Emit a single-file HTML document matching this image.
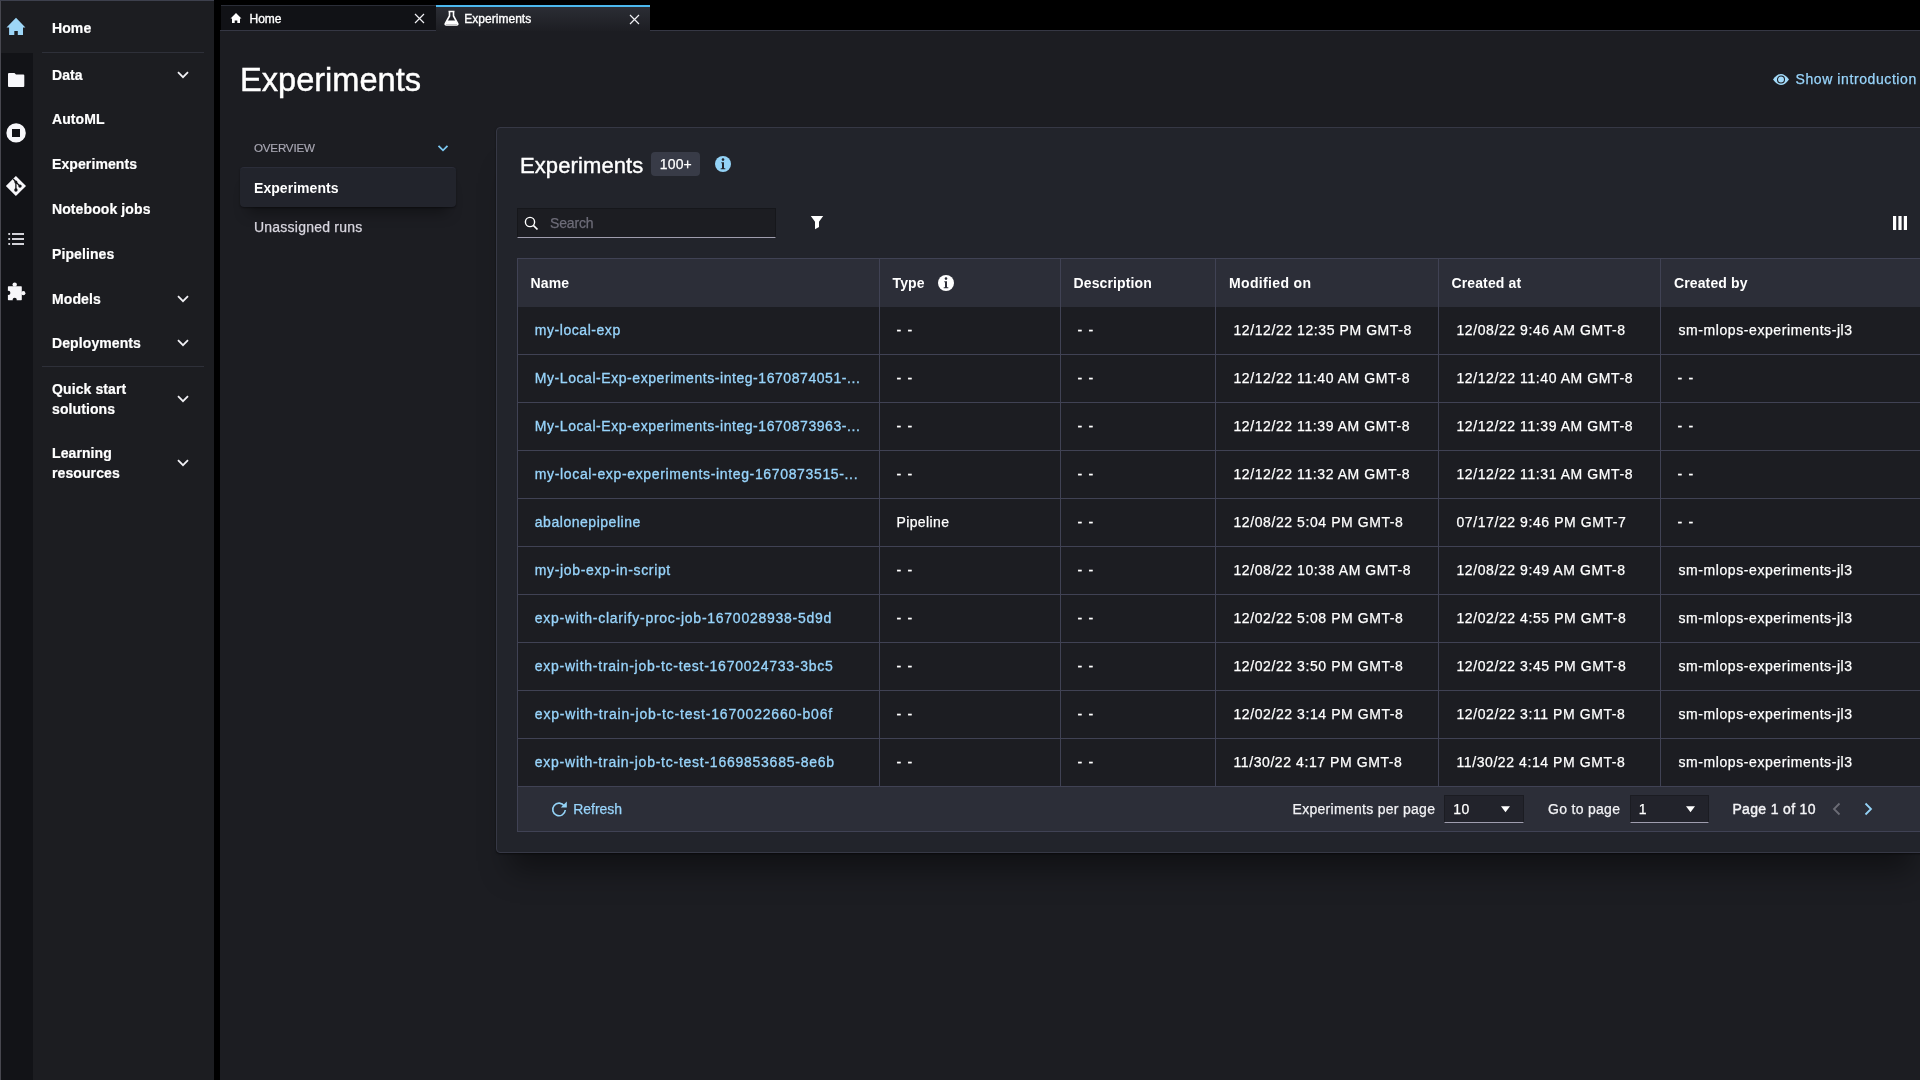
<!DOCTYPE html>
<html><head><meta charset="utf-8"><title>Experiments</title>
<style>
html,body{margin:0;padding:0;width:1920px;height:1080px;overflow:hidden;background:#1c1d22;font-family:"Liberation Sans", sans-serif;}
.t{position:absolute;line-height:1;white-space:nowrap;}
</style></head><body>
<div style="position:absolute;left:0;top:0;width:1920px;height:1080px;will-change:transform"><div style="position:absolute;left:0px;top:0px;width:1920px;height:1080px;background:#1c1d22"></div><div style="position:absolute;left:0px;top:0px;width:214px;height:1080px;background:#1c1d21"></div><div style="position:absolute;left:1px;top:53px;width:32px;height:1027px;background:#121317"></div><div style="position:absolute;left:0px;top:0px;width:1px;height:1080px;background:#47474f"></div><div style="position:absolute;left:0px;top:0px;width:214px;height:1px;background:#3d404d"></div><div style="position:absolute;left:214px;top:0px;width:6px;height:1080px;background:#000"></div><div style="position:absolute;left:220px;top:0px;width:1700px;height:31px;background:#000"></div><div style="position:absolute;left:220px;top:30px;width:1700px;height:1px;background:#353744"></div><div style="position:absolute;left:221px;top:5px;width:214.5px;height:25px;background:#111216;border-top:1px solid #2b2e38;box-sizing:border-box"></div><div style="position:absolute;left:436px;top:5px;width:214px;height:26px;background:linear-gradient(#2b2d34,#1d1e23);border-top:2px solid #4cb8ee;box-sizing:border-box"></div><svg style="position:absolute;left:0;top:0" width="34" height="310" viewBox="0 0 34 310">
<path d="M16 17.8 L25.4 27.5 L23 27.5 L23 35 L17.8 35 L17.8 31 L14.3 31 L14.3 35 L9.1 35 L9.1 27.5 L6.5 27.5 Z" fill="#9dd6f7"/>
<path d="M8 74 Q8 73 9 73 L14.5 73 L16 74.6 L23.3 74.6 Q24.3 74.6 24.3 75.6 L24.3 86 Q24.3 87 23.3 87 L9 87 Q8 87 8 86 Z" fill="#f7f7fa"/>
<circle cx="16.1" cy="132.9" r="9.7" fill="#f7f7fa"/>
<rect x="12" y="129" width="8" height="8" fill="#121317"/>
<path d="M15.9 175.9 L26 186 L15.9 196 L5.9 186 Z" fill="#f7f7fa"/>
<path d="M13.2 178.8 L15.9 182 L15.9 190 M15.9 182 L20 186.1" stroke="#121317" stroke-width="1.3" fill="none"/>
<circle cx="15.9" cy="182" r="1.5" fill="#121317"/><circle cx="15.9" cy="190" r="1.7" fill="#121317"/><circle cx="20" cy="186.1" r="1.7" fill="#121317"/>
<g fill="#e8e8ee"><circle cx="9.2" cy="234" r="1.1"/><circle cx="9.2" cy="239" r="1.1"/><circle cx="9.2" cy="244" r="1.1"/>
<rect x="12" y="233.1" width="12" height="1.8"/><rect x="12" y="238.1" width="12" height="1.8"/><rect x="12" y="243.1" width="12" height="1.8"/></g>
<g fill="#f7f7fa"><rect x="7.9" y="286.3" width="13.9" height="13.9" rx="0.6"/><circle cx="14.7" cy="284.6" r="2.2"/><circle cx="23.3" cy="293.2" r="2.1"/></g>
<g fill="#121317"><circle cx="8.3" cy="292.9" r="2.1"/><circle cx="14.7" cy="299.9" r="2.1"/></g>
</svg><div class="t" style="left:52px;top:21.15px;font-size:14px;font-weight:700;color:#ffffff;letter-spacing:0.1px;-webkit-text-stroke:0.2px #ffffff;">Home</div><div style="position:absolute;left:42px;top:52px;width:162px;height:1px;background:#2e3039"></div><div class="t" style="left:52px;top:68.15px;font-size:14px;font-weight:700;color:#ffffff;letter-spacing:0.1px;-webkit-text-stroke:0.2px #ffffff;">Data</div><svg style="position:absolute;left:177px;top:71px" width="12" height="8" viewBox="0 0 12 8"><path d="M1 1.2 L6 6.2 L11 1.2" stroke="#f0f0f4" stroke-width="1.8" fill="none"/></svg><div class="t" style="left:52px;top:111.65px;font-size:14px;font-weight:700;color:#ffffff;letter-spacing:0.1px;-webkit-text-stroke:0.2px #ffffff;">AutoML</div><div class="t" style="left:52px;top:157.15px;font-size:14px;font-weight:700;color:#ffffff;letter-spacing:0.1px;-webkit-text-stroke:0.2px #ffffff;">Experiments</div><div class="t" style="left:52px;top:202.25px;font-size:14px;font-weight:700;color:#ffffff;letter-spacing:0.1px;-webkit-text-stroke:0.2px #ffffff;">Notebook jobs</div><div class="t" style="left:52px;top:247.15px;font-size:14px;font-weight:700;color:#ffffff;letter-spacing:0.1px;-webkit-text-stroke:0.2px #ffffff;">Pipelines</div><div class="t" style="left:52px;top:292.35px;font-size:14px;font-weight:700;color:#ffffff;letter-spacing:0.1px;-webkit-text-stroke:0.2px #ffffff;">Models</div><svg style="position:absolute;left:177px;top:295px" width="12" height="8" viewBox="0 0 12 8"><path d="M1 1.2 L6 6.2 L11 1.2" stroke="#f0f0f4" stroke-width="1.8" fill="none"/></svg><div class="t" style="left:52px;top:336.35px;font-size:14px;font-weight:700;color:#ffffff;letter-spacing:0.1px;-webkit-text-stroke:0.2px #ffffff;">Deployments</div><svg style="position:absolute;left:177px;top:339px" width="12" height="8" viewBox="0 0 12 8"><path d="M1 1.2 L6 6.2 L11 1.2" stroke="#f0f0f4" stroke-width="1.8" fill="none"/></svg><div style="position:absolute;left:42px;top:366px;width:162px;height:1px;background:#2e3039"></div><div class="t" style="left:52px;top:382.45px;font-size:14px;font-weight:700;color:#ffffff;letter-spacing:0.1px;-webkit-text-stroke:0.2px #ffffff;">Quick start</div><div class="t" style="left:52px;top:402.25px;font-size:14px;font-weight:700;color:#ffffff;letter-spacing:0.1px;-webkit-text-stroke:0.2px #ffffff;">solutions</div><svg style="position:absolute;left:177px;top:395px" width="12" height="8" viewBox="0 0 12 8"><path d="M1 1.2 L6 6.2 L11 1.2" stroke="#f0f0f4" stroke-width="1.8" fill="none"/></svg><div class="t" style="left:52px;top:446.25px;font-size:14px;font-weight:700;color:#ffffff;letter-spacing:0.1px;-webkit-text-stroke:0.2px #ffffff;">Learning</div><div class="t" style="left:52px;top:466.15px;font-size:14px;font-weight:700;color:#ffffff;letter-spacing:0.1px;-webkit-text-stroke:0.2px #ffffff;">resources</div><svg style="position:absolute;left:177px;top:459px" width="12" height="8" viewBox="0 0 12 8"><path d="M1 1.2 L6 6.2 L11 1.2" stroke="#f0f0f4" stroke-width="1.8" fill="none"/></svg><svg style="position:absolute;left:229px;top:12px" width="14" height="12" viewBox="0 0 14 12"><path d="M7 1 L12.5 6.5 L11 6.5 L11 11 L8.3 11 L8.3 8.5 L5.7 8.5 L5.7 11 L3 11 L3 6.5 L1.5 6.5 Z" fill="#fff"/></svg><div class="t" style="left:249.6px;top:12.74px;font-size:12px;font-weight:400;color:#fff;letter-spacing:-0.1px;-webkit-text-stroke:0.35px #fff;">Home</div><svg style="position:absolute;left:413.5px;top:13px" width="11" height="11" viewBox="0 0 11 11"><path d="M1 1 L10 10 M10 1 L1 10" stroke="#f0f0f4" stroke-width="1.2"/></svg><svg style="position:absolute;left:444px;top:10px" width="15" height="16" viewBox="0 0 15 16"><path d="M4.5 1.5 L10.5 1.5 M5.5 1.5 L5.5 6 L1.3 13.5 Q0.8 15 2.3 15 L12.7 15 Q14.2 15 13.7 13.5 L9.5 6 L9.5 1.5" stroke="#fff" stroke-width="1.6" fill="none"/><path d="M3.2 10.5 L11.8 10.5 L13.5 14 L1.5 14 Z" fill="#fff"/></svg><div class="t" style="left:464.3px;top:13.14px;font-size:12px;font-weight:400;color:#fff;letter-spacing:0.02px;-webkit-text-stroke:0.35px #fff;">Experiments</div><svg style="position:absolute;left:628.5px;top:14px" width="11" height="11" viewBox="0 0 11 11"><path d="M1 1 L10 10 M10 1 L1 10" stroke="#f0f0f4" stroke-width="1.2"/></svg><div class="t" style="left:240px;top:63.60px;font-size:32.6px;font-weight:400;color:#ffffff;letter-spacing:0px;-webkit-text-stroke:0.45px #ffffff;">Experiments</div><svg style="position:absolute;left:1772px;top:73px" width="18" height="13" viewBox="0 0 18 13"><path d="M1 6.5 Q9 -4.5 17 6.5 Q9 17.5 1 6.5 Z" fill="#a2d9f8"/><circle cx="9" cy="6.5" r="3.5" fill="none" stroke="#1c1d22" stroke-width="1.1"/><circle cx="9" cy="6.5" r="2.4" fill="#a2d9f8"/></svg><div class="t" style="left:1795.5px;top:72.40px;font-size:14px;font-weight:400;color:#98d4fb;letter-spacing:0.59px;-webkit-text-stroke:0.25px #98d4fb;">Show introduction</div><div class="t" style="left:254px;top:142.18px;font-size:11.6px;font-weight:400;color:#a9a8b4;letter-spacing:-0.2px;-webkit-text-stroke:0.15px #a9a8b4;">OVERVIEW</div><svg style="position:absolute;left:437px;top:144px" width="12" height="9" viewBox="0 0 12 9"><path d="M1.5 1.8 L6 6.3 L10.5 1.8" stroke="#7cc8f2" stroke-width="1.8" fill="none"/></svg><div style="position:absolute;left:240px;top:167px;width:216px;height:40px;background:#22242c;border-top:1px solid #2b2d39;box-sizing:border-box;border-radius:4px;box-shadow:0 1px 2px rgba(0,0,0,0.4),0 14px 14px -8px rgba(0,0,0,0.35)"></div><div class="t" style="left:254px;top:180.85px;font-size:14px;font-weight:700;color:#fff;letter-spacing:0.05px;">Experiments</div><div class="t" style="left:254px;top:220.15px;font-size:14px;font-weight:400;color:#d8d6df;letter-spacing:0.23px;-webkit-text-stroke:0.25px #d8d6df;">Unassigned runs</div><div style="position:absolute;left:496px;top:127px;width:1430px;height:726px;background:#22242b;border:1px solid #363845;border-radius:4px;box-sizing:border-box;box-shadow:0 1px 2px rgba(0,0,0,0.5),0 32px 28px -14px rgba(0,0,0,0.4)"></div><div class="t" style="left:520px;top:154.78px;font-size:22px;font-weight:400;color:#fff;letter-spacing:0.1px;-webkit-text-stroke:0.4px #fff;">Experiments</div><div style="position:absolute;left:651px;top:152px;width:49px;height:24px;background:#383b47;border-radius:4px"></div><div class="t" style="left:659.8px;top:157.15px;font-size:14px;font-weight:400;color:#fff;letter-spacing:0.15px;-webkit-text-stroke:0.25px #fff;">100+</div><svg style="position:absolute;left:715px;top:156px" width="16" height="16" viewBox="0 0 16 16"><circle cx="8" cy="8" r="8" fill="#94d3f7"/><circle cx="8" cy="3.6" r="1.3" fill="#22242b"/><path d="M6.3 6.2 L9 6.2 L9 12.2 L10.3 12.2 L10.3 13.2 L5.7 13.2 L5.7 12.2 L7 12.2 L7 7.2 L6.3 7.2 Z" fill="#22242b"/></svg><div style="position:absolute;left:517px;top:208px;width:259px;height:30px;background:#1c1d22;border:1px solid #16171b;border-bottom:1px solid #9f9dae;box-sizing:border-box"></div><svg style="position:absolute;left:523px;top:215px" width="17" height="17" viewBox="0 0 17 17"><circle cx="7" cy="7" r="4.6" stroke="#fff" stroke-width="1.4" fill="none"/><path d="M10.3 10.3 L14.5 14.5" stroke="#fff" stroke-width="1.7"/></svg><div class="t" style="left:550px;top:216.15px;font-size:14px;font-weight:400;color:#6d6c78;letter-spacing:-0.17px;-webkit-text-stroke:0.25px #6d6c78;">Search</div><svg style="position:absolute;left:810px;top:215px" width="14" height="15" viewBox="0 0 14 15"><path d="M0.8 1 L13.2 1 L9 6.8 L9 12 L5 14.2 L5 6.8 Z" fill="#fff"/></svg><svg style="position:absolute;left:1893px;top:216px" width="14" height="14" viewBox="0 0 14 14"><rect x="0" y="0" width="3.2" height="14" fill="#fff"/><rect x="5.4" y="0" width="3.2" height="14" fill="#fff"/><rect x="10.8" y="0" width="3.2" height="14" fill="#fff"/></svg><div style="position:absolute;left:517px;top:258px;width:1404px;height:574px;background:#1c1d22;border:1px solid #404254;box-sizing:border-box"></div><div style="position:absolute;left:518px;top:259px;width:1402px;height:48px;background:#2c2e38"></div><div class="t" style="left:530.5px;top:276.15px;font-size:14px;font-weight:700;color:#fff;letter-spacing:0.12px;">Name</div><div class="t" style="left:892.5px;top:276.15px;font-size:14px;font-weight:700;color:#fff;letter-spacing:0.12px;">Type</div><div class="t" style="left:1073.5px;top:276.15px;font-size:14px;font-weight:700;color:#fff;letter-spacing:0.12px;">Description</div><div class="t" style="left:1229px;top:276.15px;font-size:14px;font-weight:700;color:#fff;letter-spacing:0.35px;">Modified on</div><div class="t" style="left:1451.5px;top:276.15px;font-size:14px;font-weight:700;color:#fff;letter-spacing:0.12px;">Created at</div><div class="t" style="left:1674px;top:276.15px;font-size:14px;font-weight:700;color:#fff;letter-spacing:0.12px;">Created by</div><svg style="position:absolute;left:938px;top:274.5px" width="16" height="16" viewBox="0 0 16 16"><circle cx="8" cy="8" r="8" fill="#fff"/><circle cx="8" cy="3.6" r="1.3" fill="#2c2e38"/><path d="M6.3 6.2 L9 6.2 L9 12.2 L10.3 12.2 L10.3 13.2 L5.7 13.2 L5.7 12.2 L7 12.2 L7 7.2 L6.3 7.2 Z" fill="#2c2e38"/></svg><div style="position:absolute;left:517px;top:354px;width:1404px;height:1px;background:#404254"></div><div class="t" style="left:534.8px;top:323.35px;font-size:14px;color:#98d4fb;letter-spacing:0.55px;-webkit-text-stroke:0.32px #98d4fb">my-local-exp</div><div class="t" style="left:896.5px;top:323.35px;font-size:14px;font-weight:400;color:#ffffff;letter-spacing:1.2px;-webkit-text-stroke:0.3px #ffffff;">- -</div><div class="t" style="left:1077.5px;top:323.35px;font-size:14px;font-weight:400;color:#ffffff;letter-spacing:1.2px;-webkit-text-stroke:0.3px #ffffff;">- -</div><div class="t" style="left:1233.5px;top:323.35px;font-size:14px;font-weight:400;color:#ffffff;letter-spacing:0.58px;-webkit-text-stroke:0.25px #ffffff;">12/12/22 12:35 PM GMT-8</div><div class="t" style="left:1456.5px;top:323.35px;font-size:14px;font-weight:400;color:#ffffff;letter-spacing:0.58px;-webkit-text-stroke:0.25px #ffffff;">12/08/22 9:46 AM GMT-8</div><div class="t" style="left:1678.5px;top:323.35px;font-size:14px;font-weight:400;color:#ffffff;letter-spacing:0.58px;-webkit-text-stroke:0.25px #ffffff;">sm-mlops-experiments-jl3</div><div style="position:absolute;left:517px;top:402px;width:1404px;height:1px;background:#404254"></div><div class="t" style="left:534.8px;top:371.35px;font-size:14px;color:#98d4fb;letter-spacing:0.56px;-webkit-text-stroke:0.32px #98d4fb">My-Local-Exp-experiments-integ-1670874051-...</div><div class="t" style="left:896.5px;top:371.35px;font-size:14px;font-weight:400;color:#ffffff;letter-spacing:1.2px;-webkit-text-stroke:0.3px #ffffff;">- -</div><div class="t" style="left:1077.5px;top:371.35px;font-size:14px;font-weight:400;color:#ffffff;letter-spacing:1.2px;-webkit-text-stroke:0.3px #ffffff;">- -</div><div class="t" style="left:1233.5px;top:371.35px;font-size:14px;font-weight:400;color:#ffffff;letter-spacing:0.58px;-webkit-text-stroke:0.25px #ffffff;">12/12/22 11:40 AM GMT-8</div><div class="t" style="left:1456.5px;top:371.35px;font-size:14px;font-weight:400;color:#ffffff;letter-spacing:0.58px;-webkit-text-stroke:0.25px #ffffff;">12/12/22 11:40 AM GMT-8</div><div class="t" style="left:1677.5px;top:371.35px;font-size:14px;font-weight:400;color:#ffffff;letter-spacing:1.2px;-webkit-text-stroke:0.3px #ffffff;">- -</div><div style="position:absolute;left:517px;top:450px;width:1404px;height:1px;background:#404254"></div><div class="t" style="left:534.8px;top:419.35px;font-size:14px;color:#98d4fb;letter-spacing:0.56px;-webkit-text-stroke:0.32px #98d4fb">My-Local-Exp-experiments-integ-1670873963-...</div><div class="t" style="left:896.5px;top:419.35px;font-size:14px;font-weight:400;color:#ffffff;letter-spacing:1.2px;-webkit-text-stroke:0.3px #ffffff;">- -</div><div class="t" style="left:1077.5px;top:419.35px;font-size:14px;font-weight:400;color:#ffffff;letter-spacing:1.2px;-webkit-text-stroke:0.3px #ffffff;">- -</div><div class="t" style="left:1233.5px;top:419.35px;font-size:14px;font-weight:400;color:#ffffff;letter-spacing:0.58px;-webkit-text-stroke:0.25px #ffffff;">12/12/22 11:39 AM GMT-8</div><div class="t" style="left:1456.5px;top:419.35px;font-size:14px;font-weight:400;color:#ffffff;letter-spacing:0.58px;-webkit-text-stroke:0.25px #ffffff;">12/12/22 11:39 AM GMT-8</div><div class="t" style="left:1677.5px;top:419.35px;font-size:14px;font-weight:400;color:#ffffff;letter-spacing:1.2px;-webkit-text-stroke:0.3px #ffffff;">- -</div><div style="position:absolute;left:517px;top:498px;width:1404px;height:1px;background:#404254"></div><div class="t" style="left:534.8px;top:467.35px;font-size:14px;color:#98d4fb;letter-spacing:0.65px;-webkit-text-stroke:0.32px #98d4fb">my-local-exp-experiments-integ-1670873515-...</div><div class="t" style="left:896.5px;top:467.35px;font-size:14px;font-weight:400;color:#ffffff;letter-spacing:1.2px;-webkit-text-stroke:0.3px #ffffff;">- -</div><div class="t" style="left:1077.5px;top:467.35px;font-size:14px;font-weight:400;color:#ffffff;letter-spacing:1.2px;-webkit-text-stroke:0.3px #ffffff;">- -</div><div class="t" style="left:1233.5px;top:467.35px;font-size:14px;font-weight:400;color:#ffffff;letter-spacing:0.58px;-webkit-text-stroke:0.25px #ffffff;">12/12/22 11:32 AM GMT-8</div><div class="t" style="left:1456.5px;top:467.35px;font-size:14px;font-weight:400;color:#ffffff;letter-spacing:0.58px;-webkit-text-stroke:0.25px #ffffff;">12/12/22 11:31 AM GMT-8</div><div class="t" style="left:1677.5px;top:467.35px;font-size:14px;font-weight:400;color:#ffffff;letter-spacing:1.2px;-webkit-text-stroke:0.3px #ffffff;">- -</div><div style="position:absolute;left:517px;top:546px;width:1404px;height:1px;background:#404254"></div><div class="t" style="left:534.8px;top:515.35px;font-size:14px;color:#98d4fb;letter-spacing:0.53px;-webkit-text-stroke:0.32px #98d4fb">abalonepipeline</div><div class="t" style="left:896.5px;top:515.35px;font-size:14px;font-weight:400;color:#ffffff;letter-spacing:0.38px;-webkit-text-stroke:0.25px #ffffff;">Pipeline</div><div class="t" style="left:1077.5px;top:515.35px;font-size:14px;font-weight:400;color:#ffffff;letter-spacing:1.2px;-webkit-text-stroke:0.3px #ffffff;">- -</div><div class="t" style="left:1233.5px;top:515.35px;font-size:14px;font-weight:400;color:#ffffff;letter-spacing:0.58px;-webkit-text-stroke:0.25px #ffffff;">12/08/22 5:04 PM GMT-8</div><div class="t" style="left:1456.5px;top:515.35px;font-size:14px;font-weight:400;color:#ffffff;letter-spacing:0.58px;-webkit-text-stroke:0.25px #ffffff;">07/17/22 9:46 PM GMT-7</div><div class="t" style="left:1677.5px;top:515.35px;font-size:14px;font-weight:400;color:#ffffff;letter-spacing:1.2px;-webkit-text-stroke:0.3px #ffffff;">- -</div><div style="position:absolute;left:517px;top:594px;width:1404px;height:1px;background:#404254"></div><div class="t" style="left:534.8px;top:563.35px;font-size:14px;color:#98d4fb;letter-spacing:0.66px;-webkit-text-stroke:0.32px #98d4fb">my-job-exp-in-script</div><div class="t" style="left:896.5px;top:563.35px;font-size:14px;font-weight:400;color:#ffffff;letter-spacing:1.2px;-webkit-text-stroke:0.3px #ffffff;">- -</div><div class="t" style="left:1077.5px;top:563.35px;font-size:14px;font-weight:400;color:#ffffff;letter-spacing:1.2px;-webkit-text-stroke:0.3px #ffffff;">- -</div><div class="t" style="left:1233.5px;top:563.35px;font-size:14px;font-weight:400;color:#ffffff;letter-spacing:0.58px;-webkit-text-stroke:0.25px #ffffff;">12/08/22 10:38 AM GMT-8</div><div class="t" style="left:1456.5px;top:563.35px;font-size:14px;font-weight:400;color:#ffffff;letter-spacing:0.58px;-webkit-text-stroke:0.25px #ffffff;">12/08/22 9:49 AM GMT-8</div><div class="t" style="left:1678.5px;top:563.35px;font-size:14px;font-weight:400;color:#ffffff;letter-spacing:0.58px;-webkit-text-stroke:0.25px #ffffff;">sm-mlops-experiments-jl3</div><div style="position:absolute;left:517px;top:642px;width:1404px;height:1px;background:#404254"></div><div class="t" style="left:534.8px;top:611.35px;font-size:14px;color:#98d4fb;letter-spacing:0.74px;-webkit-text-stroke:0.32px #98d4fb">exp-with-clarify-proc-job-1670028938-5d9d</div><div class="t" style="left:896.5px;top:611.35px;font-size:14px;font-weight:400;color:#ffffff;letter-spacing:1.2px;-webkit-text-stroke:0.3px #ffffff;">- -</div><div class="t" style="left:1077.5px;top:611.35px;font-size:14px;font-weight:400;color:#ffffff;letter-spacing:1.2px;-webkit-text-stroke:0.3px #ffffff;">- -</div><div class="t" style="left:1233.5px;top:611.35px;font-size:14px;font-weight:400;color:#ffffff;letter-spacing:0.58px;-webkit-text-stroke:0.25px #ffffff;">12/02/22 5:08 PM GMT-8</div><div class="t" style="left:1456.5px;top:611.35px;font-size:14px;font-weight:400;color:#ffffff;letter-spacing:0.58px;-webkit-text-stroke:0.25px #ffffff;">12/02/22 4:55 PM GMT-8</div><div class="t" style="left:1678.5px;top:611.35px;font-size:14px;font-weight:400;color:#ffffff;letter-spacing:0.58px;-webkit-text-stroke:0.25px #ffffff;">sm-mlops-experiments-jl3</div><div style="position:absolute;left:517px;top:690px;width:1404px;height:1px;background:#404254"></div><div class="t" style="left:534.8px;top:659.35px;font-size:14px;color:#98d4fb;letter-spacing:0.74px;-webkit-text-stroke:0.32px #98d4fb">exp-with-train-job-tc-test-1670024733-3bc5</div><div class="t" style="left:896.5px;top:659.35px;font-size:14px;font-weight:400;color:#ffffff;letter-spacing:1.2px;-webkit-text-stroke:0.3px #ffffff;">- -</div><div class="t" style="left:1077.5px;top:659.35px;font-size:14px;font-weight:400;color:#ffffff;letter-spacing:1.2px;-webkit-text-stroke:0.3px #ffffff;">- -</div><div class="t" style="left:1233.5px;top:659.35px;font-size:14px;font-weight:400;color:#ffffff;letter-spacing:0.58px;-webkit-text-stroke:0.25px #ffffff;">12/02/22 3:50 PM GMT-8</div><div class="t" style="left:1456.5px;top:659.35px;font-size:14px;font-weight:400;color:#ffffff;letter-spacing:0.58px;-webkit-text-stroke:0.25px #ffffff;">12/02/22 3:45 PM GMT-8</div><div class="t" style="left:1678.5px;top:659.35px;font-size:14px;font-weight:400;color:#ffffff;letter-spacing:0.58px;-webkit-text-stroke:0.25px #ffffff;">sm-mlops-experiments-jl3</div><div style="position:absolute;left:517px;top:738px;width:1404px;height:1px;background:#404254"></div><div class="t" style="left:534.8px;top:707.35px;font-size:14px;color:#98d4fb;letter-spacing:0.8px;-webkit-text-stroke:0.32px #98d4fb">exp-with-train-job-tc-test-1670022660-b06f</div><div class="t" style="left:896.5px;top:707.35px;font-size:14px;font-weight:400;color:#ffffff;letter-spacing:1.2px;-webkit-text-stroke:0.3px #ffffff;">- -</div><div class="t" style="left:1077.5px;top:707.35px;font-size:14px;font-weight:400;color:#ffffff;letter-spacing:1.2px;-webkit-text-stroke:0.3px #ffffff;">- -</div><div class="t" style="left:1233.5px;top:707.35px;font-size:14px;font-weight:400;color:#ffffff;letter-spacing:0.58px;-webkit-text-stroke:0.25px #ffffff;">12/02/22 3:14 PM GMT-8</div><div class="t" style="left:1456.5px;top:707.35px;font-size:14px;font-weight:400;color:#ffffff;letter-spacing:0.58px;-webkit-text-stroke:0.25px #ffffff;">12/02/22 3:11 PM GMT-8</div><div class="t" style="left:1678.5px;top:707.35px;font-size:14px;font-weight:400;color:#ffffff;letter-spacing:0.58px;-webkit-text-stroke:0.25px #ffffff;">sm-mlops-experiments-jl3</div><div style="position:absolute;left:517px;top:786px;width:1404px;height:1px;background:#404254"></div><div class="t" style="left:534.8px;top:755.35px;font-size:14px;color:#98d4fb;letter-spacing:0.75px;-webkit-text-stroke:0.32px #98d4fb">exp-with-train-job-tc-test-1669853685-8e6b</div><div class="t" style="left:896.5px;top:755.35px;font-size:14px;font-weight:400;color:#ffffff;letter-spacing:1.2px;-webkit-text-stroke:0.3px #ffffff;">- -</div><div class="t" style="left:1077.5px;top:755.35px;font-size:14px;font-weight:400;color:#ffffff;letter-spacing:1.2px;-webkit-text-stroke:0.3px #ffffff;">- -</div><div class="t" style="left:1233.5px;top:755.35px;font-size:14px;font-weight:400;color:#ffffff;letter-spacing:0.58px;-webkit-text-stroke:0.25px #ffffff;">11/30/22 4:17 PM GMT-8</div><div class="t" style="left:1456.5px;top:755.35px;font-size:14px;font-weight:400;color:#ffffff;letter-spacing:0.58px;-webkit-text-stroke:0.25px #ffffff;">11/30/22 4:14 PM GMT-8</div><div class="t" style="left:1678.5px;top:755.35px;font-size:14px;font-weight:400;color:#ffffff;letter-spacing:0.58px;-webkit-text-stroke:0.25px #ffffff;">sm-mlops-experiments-jl3</div><div style="position:absolute;left:879px;top:259px;width:1px;height:527px;background:#404254"></div><div style="position:absolute;left:1060px;top:259px;width:1px;height:527px;background:#404254"></div><div style="position:absolute;left:1215px;top:259px;width:1px;height:527px;background:#404254"></div><div style="position:absolute;left:1438px;top:259px;width:1px;height:527px;background:#404254"></div><div style="position:absolute;left:1660px;top:259px;width:1px;height:527px;background:#404254"></div><div style="position:absolute;left:518px;top:787px;width:1402px;height:44px;background:#2c2e38"></div><svg style="position:absolute;left:550px;top:800px" width="18" height="18" viewBox="0 0 18 18"><path d="M14.3 6 A6.3 6.3 0 1 0 15.3 10" stroke="#94d3f7" stroke-width="1.6" fill="none"/><path d="M16.8 1.5 L16.8 7.5 L10.8 7.5 Z" fill="#94d3f7"/></svg><div class="t" style="left:573.3px;top:802.05px;font-size:14px;font-weight:400;color:#98d4fb;letter-spacing:-0.05px;-webkit-text-stroke:0.25px #98d4fb;">Refresh</div><div class="t" style="left:1292.5px;top:802.35px;font-size:14px;font-weight:400;color:#f2f2f5;letter-spacing:0.29px;-webkit-text-stroke:0.25px #f2f2f5;">Experiments per page</div><div style="position:absolute;left:1444px;top:795.3px;width:80px;height:27.4px;background:#22232b;border:1px solid #1b1c22;border-bottom:1px solid #9f9dae;box-sizing:border-box"></div><div class="t" style="left:1453.3px;top:802.35px;font-size:14px;font-weight:400;color:#fff;letter-spacing:0.4px;-webkit-text-stroke:0.25px #fff;">10</div><svg style="position:absolute;left:1500.5px;top:805.5px" width="9" height="7" viewBox="0 0 9 7"><path d="M0 0.3 L9 0.3 L4.5 6.3 Z" fill="#fff"/></svg><div class="t" style="left:1548px;top:802.35px;font-size:14px;font-weight:400;color:#f2f2f5;letter-spacing:0.3px;-webkit-text-stroke:0.25px #f2f2f5;">Go to page</div><div style="position:absolute;left:1629.5px;top:795.3px;width:79px;height:27.4px;background:#22232b;border:1px solid #1b1c22;border-bottom:1px solid #9f9dae;box-sizing:border-box"></div><div class="t" style="left:1638.8px;top:802.35px;font-size:14px;font-weight:400;color:#fff;letter-spacing:0.4px;-webkit-text-stroke:0.25px #fff;">1</div><svg style="position:absolute;left:1686.0px;top:805.5px" width="9" height="7" viewBox="0 0 9 7"><path d="M0 0.3 L9 0.3 L4.5 6.3 Z" fill="#fff"/></svg><div class="t" style="left:1732.4px;top:802.35px;font-size:14px;font-weight:400;color:#f4f4f7;letter-spacing:0.34px;-webkit-text-stroke:0.4px #f4f4f7;">Page 1 of 10</div><svg style="position:absolute;left:1831px;top:802px" width="11" height="14" viewBox="0 0 11 14"><path d="M8.5 1.5 L3 7 L8.5 12.5" stroke="#6b6c75" stroke-width="1.8" fill="none"/></svg><svg style="position:absolute;left:1862.5px;top:802px" width="11" height="14" viewBox="0 0 11 14"><path d="M2.5 1.5 L8 7 L2.5 12.5" stroke="#94d3f7" stroke-width="1.8" fill="none"/></svg></div>
</body></html>
